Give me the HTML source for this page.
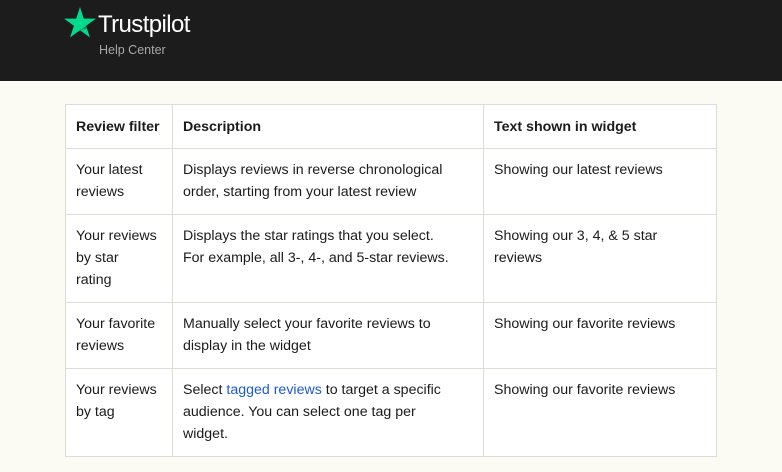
<!DOCTYPE html>
<html><head><style>
body{margin:0;background:#fbfaf3;font-family:"Liberation Sans",sans-serif;width:782px;height:472px;overflow:hidden}
.h{height:81px;background:#1c1c1c;position:relative}
.logo{position:absolute;left:64px;top:7px}
.t{position:absolute;left:98px;top:11px;color:#fff;font-size:24px;letter-spacing:-0.6px}
.s{position:absolute;left:99px;top:43px;color:#a8a8a8;font-size:12.5px}
table{position:absolute;left:65px;top:104px;width:651px;table-layout:fixed;border-collapse:collapse;background:#fff;font-size:14.2px;color:#1b1b1b;line-height:22px}
td,th{border:1px solid #dcdcd3;padding:10px 10px;vertical-align:top;text-align:left;white-space:nowrap;overflow:hidden}
th{font-weight:bold;height:22px;padding:11px 10px 10px}
a{color:#1c5ad7;text-decoration:none}
</style></head><body>
<div class="h">
<svg class="logo" width="32" height="31" viewBox="0 0 32 31"><polygon fill="#04da8d" points="16,0 19.8,11.6 32,11.6 22.1,18.8 25.9,30.4 16,23.2 6.1,30.4 9.9,18.8 0,11.6 12.2,11.6"/><polygon fill="#0b8a5a" points="22.1,18.8 23,21.6 16,23.2"/></svg>
<div class="t">Trustpilot</div>
<div class="s">Help Center</div>
</div>
<table>
<colgroup><col style="width:107px"><col style="width:311px"><col style="width:233px"></colgroup>
<tr><th>Review filter</th><th>Description</th><th>Text shown in widget</th></tr>
<tr style="height:66px"><td>Your latest<br>reviews</td><td>Displays reviews in reverse chronological<br>order, starting from your latest review</td><td>Showing our latest reviews</td></tr>
<tr style="height:88px"><td>Your reviews<br>by star<br>rating</td><td>Displays the star ratings that you select.<br>For example, all 3-, 4-, and 5-star reviews.</td><td>Showing our 3, 4, &amp; 5 star<br>reviews</td></tr>
<tr style="height:66px"><td>Your favorite<br>reviews</td><td>Manually select your favorite reviews to<br>display in the widget</td><td>Showing our favorite reviews</td></tr>
<tr style="height:88px"><td>Your reviews<br>by tag</td><td>Select <a>tagged reviews</a> to target a specific<br>audience. You can select one tag per<br>widget.</td><td>Showing our favorite reviews</td></tr>
</table>
</body></html>
